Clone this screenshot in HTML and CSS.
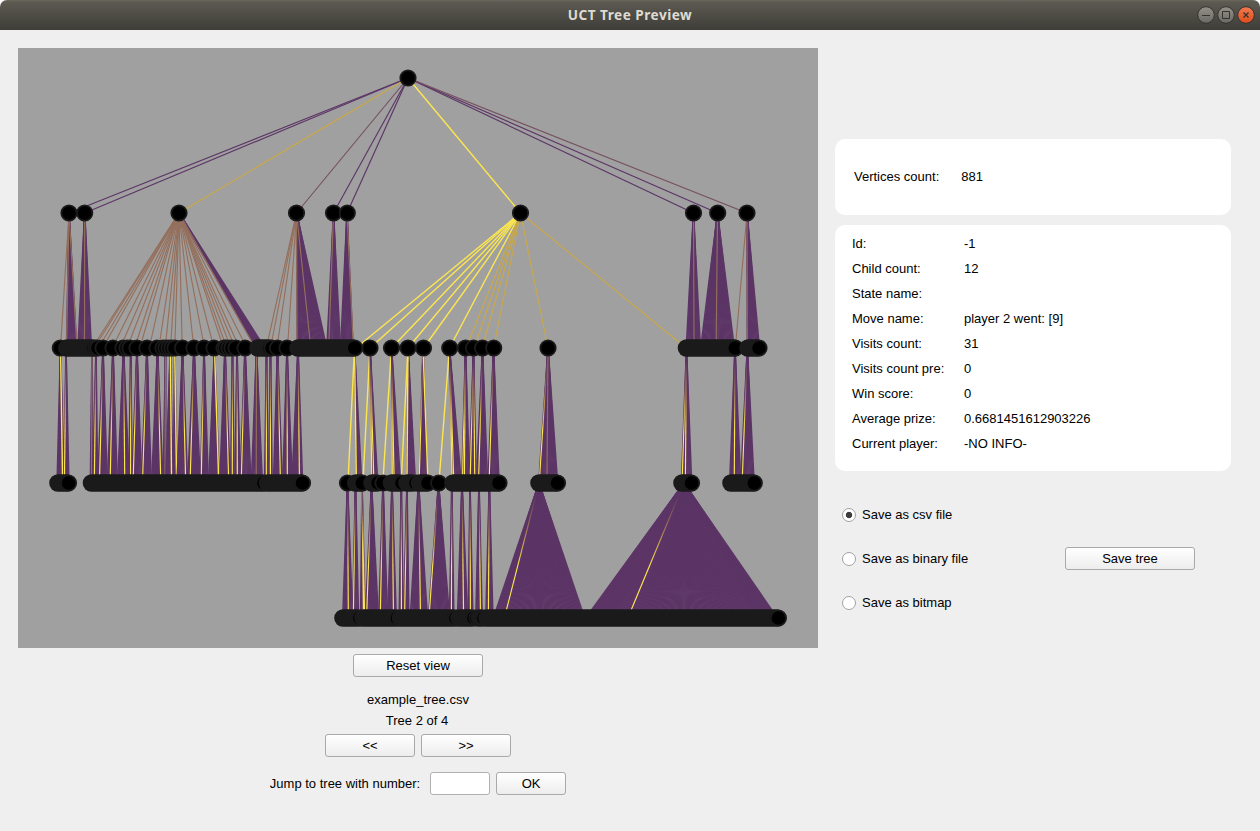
FILE: index.html
```html
<!DOCTYPE html>
<html lang="en">
<head>
<meta charset="utf-8">
<title>UCT Tree Preview</title>
<link rel="stylesheet" href="styles.css">
</head>
<body>
<div class="window">
  <header class="titlebar">
    <h1 class="title">UCT Tree Preview</h1>
    <svg class="window-buttons" width="54" height="20" viewBox="0 0 54 20">
      <defs>
        <linearGradient id="btn-gray" x1="0" y1="0" x2="0" y2="1"><stop offset="0" stop-color="#93918a"/><stop offset="1" stop-color="#6b6963"/></linearGradient>
        <linearGradient id="btn-orange" x1="0" y1="0" x2="0" y2="1"><stop offset="0" stop-color="#f37a50"/><stop offset="1" stop-color="#de4c1b"/></linearGradient>
      </defs>
      <g stroke="#34332e">
        <circle cx="7" cy="10" r="8.3" fill="url(#btn-gray)"/>
        <circle cx="27" cy="10" r="8.3" fill="url(#btn-gray)"/>
        <circle cx="47" cy="10" r="8.3" fill="url(#btn-orange)"/>
        <path d="M3 10.5h8M23.5 6.500h7v7h-7z" fill="none"/>
        <path d="M44.500 7.500l5 5M49.500 7.500l-5 5" fill="none" stroke-width="1.3"/>
      </g>
    </svg>
  </header>
  <main class="content">
    <section class="preview">
      <svg class="tree" id="tree" width="800" height="600" viewBox="18 48 800 600"></svg>
      <button class="button wide reset">Reset view</button>
      <div class="file-name">example_tree.csv</div>
      <div class="tree-index">Tree 2 of 4</div>
      <div class="pager">
        <button class="button medium">&lt;&lt;</button>
        <button class="button medium">&gt;&gt;</button>
      </div>
      <div class="jump">
        <label class="jump-label" for="number">Jump to tree with number:</label>
        <input class="number" id="number" type="text">
        <button class="button small">OK</button>
      </div>
    </section>
    <aside class="side">
      <div class="card summary"><span>Vertices count:</span><span>881</span></div>
      <dl class="card details">
        <dt>Id:</dt><dd>-1</dd>
        <dt>Child count:</dt><dd>12</dd>
        <dt>State name:</dt><dd></dd>
        <dt>Move name:</dt><dd>player 2 went: [9]</dd>
        <dt>Visits count:</dt><dd>31</dd>
        <dt>Visits count pre:</dt><dd>0</dd>
        <dt>Win score:</dt><dd>0</dd>
        <dt>Average prize:</dt><dd>0.6681451612903226</dd>
        <dt>Current player:</dt><dd>-NO INFO-</dd>
      </dl>
      <div class="save">
        <div class="options">
          <label class="option"><input class="radio" type="radio" name="format" checked>Save as csv file</label>
          <label class="option"><input class="radio" type="radio" name="format">Save as binary file</label>
          <label class="option"><input class="radio" type="radio" name="format">Save as bitmap</label>
        </div>
        <button class="button wide">Save tree</button>
      </div>
    </aside>
  </main>
</div>
<script src="tree.js"></script>
</body>
</html>
```
FILE: styles.css
```css
* { box-sizing: border-box; }
body { margin: 0; background: #fff; font: 13px/15px "Liberation Sans", Arial, sans-serif; color: #000; }
.window { width: 1260px; height: 831px; background: #efefef; border-radius: 7px 7px 0 0; overflow: hidden; }
.titlebar { height: 30px; display: grid; grid-template-columns: 1fr auto 1fr; align-items: center; padding-right: 7px; background: linear-gradient(#6b695f 0, #5c5a51 2px, #3e3d38 100%); }
.title { grid-column: 2; margin: 0 0 0 7px; font: bold 13.6px/18px "Noto Sans", sans-serif; letter-spacing: 0.5px; color: #dfdbd2; }
.window-buttons { justify-self: end; overflow: visible; }
.content { display: flex; gap: 17px; padding: 18px 0 0 18px; }
.preview { width: 800px; display: flex; flex-direction: column; align-items: center; }
.tree { display: block; background: #a0a0a0; }
.button { height: 23px; padding: 0; border: 1px solid #a9a9a9; border-radius: 3px; background: linear-gradient(#fff, #ededed); font: inherit; color: #000; }
.wide { width: 130px; }
.medium { width: 90px; }
.small { width: 70px; }
.reset { margin-top: 6px; }
.file-name { margin-top: 15px; }
.tree-index { margin: 6px 2px 0 0; }
.pager { display: flex; gap: 6px; margin-top: 6px; }
.jump { display: flex; align-items: center; margin-top: 15px; }
.jump-label { margin-right: 10px; }
.number { width: 60px; height: 23px; margin: 0 6px 0 0; border: 1px solid #b0b0b0; border-radius: 3px; background: #fff; font: inherit; }
.side { width: 396px; padding-top: 91px; }
.card { background: #fff; border-radius: 10px; margin: 0 0 10px; }
.summary { height: 76px; display: flex; align-items: center; gap: 22px; padding: 0 0 2px 19px; }
.details { height: 246px; display: grid; grid-template-columns: 112px 1fr; grid-auto-rows: 25px; padding: 11px 0 0 17px; }
.details dd { margin: 0; }
.save { display: flex; justify-content: space-between; align-items: center; padding: 26px 36px 0 7px; }
.options { display: flex; flex-direction: column; gap: 29px; }
.option { display: flex; align-items: center; gap: 6px; }
.radio { appearance: none; width: 14px; height: 14px; margin: 0; border: 1px solid #a2a2a2; border-radius: 50%; background: #fff; }
.radio:checked { background: radial-gradient(circle, #3c3c3c 0 2.800px, #fff 3.600px); }
```
FILE: tree.js
```js
const svg = document.getElementById("tree");
const NS = "http://www.w3.org/2000/svg";
const rows = [78, 213, 348, 483, 618];
const colors = { p: "#5c3566", b: "#946f5c", m: "#76505f", g: "#c9a849", y: "#fce650" };

function add(name, attrs, parent = svg) {
  const el = document.createElementNS(NS, name);
  for (const key in attrs) el.setAttribute(key, attrs[key]);
  parent.appendChild(el);
  return el;
}

const defs = add("defs", {});
rows.forEach((y, i) => {
  const g = add("linearGradient", { id: "fade" + i, gradientUnits: "userSpaceOnUse", x1: 0, x2: 0, y1: y, y2: y + 135 }, defs);
  [[0.1, "#5c3566"], [0.35, "#a37b57"], [0.62, "#fce650"]].forEach(([o, c]) => add("stop", { offset: o, "stop-color": c }, g));
});

function edge(level, x1, x2, kind, width = 1.15) {
  const color = kind === "f" ? `url(#fade${level})` : colors[kind];
  add("line", { x1, y1: rows[level], x2: x2 + 0.01, y2: rows[level + 1], stroke: color, "stroke-width": width });
}

// parent x, left and right where the fan meets the child markers, then accent edges
const fans = [
  [],
  [
    [69, 66.7, 76.3, "b61", "b66.7", "b76.5"], [84.7, 78.3, 91, "b84.5"],
    [179, 251.7, 260, ...[97, 99, 103, 107, 116, 123.500, 130, 137, 142, 151, 160, 166, 171, 175, 182, 193, 203, 212, 221, 224, 228, 232, 236, 243, 251].map(x => "b" + x)],
    [296.5, 297.3, 325, "b268", "b272", "b278", "b288", "b297", "b310"],
    [333.5, 327.3, 340, "b329"], [347, 341, 352.7, "b353"],
    [693.5, 686.7, 700, "b694"], [717.5, 701.7, 733.3, "b716.2"], [747, 747.3, 758.7, "b736", "b747.3"]
  ],
  [
    [60.5, 57.3, 64, "y62.5"], [66, 64, 68.7, "f64.5"], [92, 90.5, 93, "b91.5"], [96, 93, 97.5, "f94.4"],
    [103, 98, 107, "f99.6"], [113, 107.7, 117, "f110.3"], [123.5, 118, 129, "f124.7"], [130.7, 129, 132, "f130.6"],
    [137, 132, 141.3, "f133.3"], [147, 141.5, 151, "f142.7"], [157.5, 152, 162.7, "f160.6"], [165.5, 163.3, 166, "b165"],
    [170.3, 166, 173, "y171.5"], [174.7, 173.5, 177, "y176.5"], [182.5, 177.3, 187.3, "f185.5"], [194, 188, 200, "f190.3"],
    [204, 200.7, 208, "f201.3"], [214.5, 209, 219, "y218.5"], [225, 220, 230, "f228.5"], [232.5, 230.7, 234, "f232.3"],
    [237, 235, 240, "f237.3"], [245, 240.3, 250.7, "f241.4"], [256.5, 251.7, 262, "b256.2"], [266.5, 264.7, 268, "f266.3"],
    [270.5, 268.7, 272, "f270.4"], [277.5, 273.7, 282, "f280.3"], [287, 283, 292, "f287.3"], [298, 292.3, 302.3, "f299.4"],
    [354.5, 356.7, 361.3, "y348.3", "y356.3"], [370, 372.5, 377.3, "y363.3", "f371.7", "f373.7"],
    [391.5, 393, 400, "y383.3", "f392.3", "f394"], [408, 407, 415, "y401.5", "y407"], [423, 419.5, 427.3, "f419.3", "y427.7"],
    [449.5, 453, 460.7, "y439.5", "f452", "f453.6"], [465.5, 462, 469.3, "f462.6", "f464.4"], [473.5, 469.3, 476, "f470.3", "f474.7"],
    [482.5, 476.7, 487.3, "f478.7"], [493.5, 488.3, 498.7, "f489.3"], [548, 539.3, 557, "f539.7", "b547"],
    [686.5, 681.7, 691.3, "f682.3", "f685.4"], [735, 730, 740.3, "f734.3"], [747.3, 741, 753.7, "f742.4"]
  ],
  [
    [347.5, 343, 352.3, "f348.3"], [355.5, 352.7, 358.3, "f353.4"], [362, 360.7, 365, "y363.5", "f364.5"],
    [371.5, 365.7, 378, "f366.8"], [383, 379, 387.3, "f380.4"], [392, 388, 396, "f393.4"], [401.3, 399.3, 403, "f401.4"],
    [407, 403.7, 408.7, "f404.7"], [418.5, 410.7, 427, "f420.4"], [438.5, 429, 449, "f429.5"], [451.8, 449.7, 453.7, "f451.4"],
    [462, 457.7, 467.3, "f463.5"], [470, 468.3, 472.7, "f470.4"], [479, 476, 482, "f480.4"], [489.3, 486, 492.7, "f488.4"],
    [539, 496, 582, "f506.3"], [684, 591.3, 772, "f631"]
  ]
];

[["p", 69], ["p", 84.7], ["g", 179], ["m", 296.5], ["p", 333.5], ["p", 347], ["y", 520.5], ["p", 693.5], ["p", 717.5], ["m", 747]]
  .forEach(([c, x]) => edge(0, 408, x, c, c === "y" ? 1.4 : 1.15));

fans.forEach((list, level) => list.forEach(([apex, left, right, ...accents]) => {
  // Reach from the marker edge down to the marker centre.
  const l = apex + (left - apex) * 1.06, r = apex + (right - apex) * 1.06;
  const n = Math.max(2, Math.ceil((r - l) / 1.25));
  for (let i = 0; i <= n; i++) edge(level, apex, l + (r - l) * i / n, "p", 1.6);
  accents.forEach(a => {
    const x = Number(a.slice(1));
    edge(level, apex, apex + (x - apex) * 1.06, a[0], a[0] === "y" ? 1.4 : 1.15);
  });
}));

[356, 370, 391.5, 408, 423.5, 449.5].forEach(x => edge(1, 520.5, x, "y", 1.4));
[466, 474, 482, 493.5, 548, 686].forEach(x => edge(1, 520.5, x, "g"));

// A number is a single node; a pair is a run of overlapping nodes.
const nodes = [
  [408],
  [69, 84.7, 179, 296.5, 333.5, 347.3, 520.5, 693.5, 717.7, 747],
  [60.3, [66.8, 92], 94, 96, 98, 103, 113, 123, 127, 130, 137, 147, 157, 163, 166, 169, 172, 175, 182.500, 194, 204, 214,
    224, 226, 229, 232, 236, 245, [258, 268], 270, 272, 277.5, 287, [298, 353], 354.7, 370, 391.5, 408, 423.5, 449.7, 465.5, 473.5, 482.5, 493.7,
    548, [686.5, 734], 735.3, [748, 757], 759],
  [[58, 67], 68.5, [91.5, 262], 264, [267.5, 301], 302.5, 347.5, [355.7, 361], 362.3, [372, 375], 378, 383, [391.5, 399],
    402, [407, 412], 416, [419.500, 426], 428, 438.7, [453, 498], 499, [539, 556], 557.5, [682, 690], 691.5, [731, 753], 754.3],
  [[343, 357], 360, [363, 395], 397.5, [400.5, 453], 456, [459, 471], 474, 477, [479.5, 481], 484, [487, 777], 778.4]
];

nodes.forEach((list, i) => list.forEach(n => {
  const y = rows[i];
  if (Array.isArray(n)) add("line", { x1: n[0], x2: n[1], y1: y, y2: y, stroke: "#1a1a1a", "stroke-width": 17.6, "stroke-linecap": "round" });
  else add("circle", { cx: n, cy: y, r: 7.7, fill: "#000", stroke: "#1a1a1a", "stroke-width": 1.8 });
}));
```
